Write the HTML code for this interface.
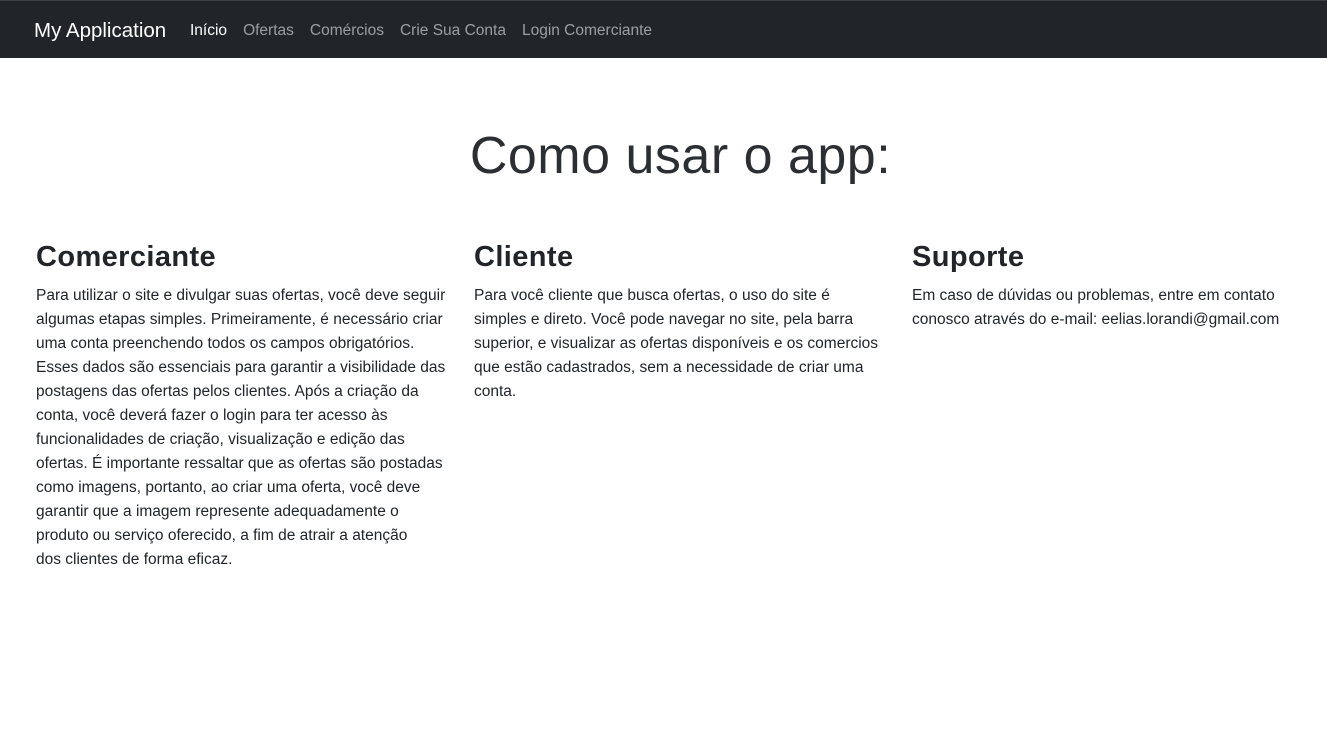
<!DOCTYPE html>
<html><head><meta charset="utf-8"><style>
*{box-sizing:border-box;margin:0;padding:0}
body{width:1327px;height:753px;background:#fff;font-family:"Liberation Sans",sans-serif;color:#212529;overflow:hidden}
nav{height:58px;background:#212529;border-top:1px solid #3a3f44;position:relative}
.brand{position:absolute;left:34px;top:18px;color:#fff;font-size:20.5px}
.links{position:absolute;left:190px;top:21px;font-size:15.5px;white-space:nowrap}
.links span{color:rgba(255,255,255,.55);margin-right:16px}
.links span.a{color:#fff}
h1{position:absolute;top:126px;left:17px;width:1327px;text-align:center;font-weight:300;font-size:52px;color:#2b2f33;letter-spacing:0.5px}
.col{position:absolute;top:238px;width:440px}
h2{font-size:29px;font-weight:bold;line-height:38px;margin-bottom:8px;letter-spacing:0.4px}
p{font-size:15.5px;line-height:24px;white-space:nowrap}
</style></head><body>
<nav><div class="brand">My Application</div>
<div class="links"><span class="a">Início</span><span>Ofertas</span><span>Comércios</span><span>Crie Sua Conta</span><span>Login Comerciante</span></div></nav>
<h1>Como usar o app:</h1>
<div class="col" style="left:36px"><h2>Comerciante</h2><p>Para utilizar o site e divulgar suas ofertas, você deve seguir<br>algumas etapas simples. Primeiramente, é necessário criar<br>uma conta preenchendo todos os campos obrigatórios.<br>Esses dados são essenciais para garantir a visibilidade das<br>postagens das ofertas pelos clientes. Após a criação da<br>conta, você deverá fazer o login para ter acesso às<br>funcionalidades de criação, visualização e edição das<br>ofertas. É importante ressaltar que as ofertas são postadas<br>como imagens, portanto, ao criar uma oferta, você deve<br>garantir que a imagem represente adequadamente o<br>produto ou serviço oferecido, a fim de atrair a atenção<br>dos clientes de forma eficaz.</p></div>
<div class="col" style="left:474px"><h2>Cliente</h2><p>Para você cliente que busca ofertas, o uso do site é<br>simples e direto. Você pode navegar no site, pela barra<br>superior, e visualizar as ofertas disponíveis e os comercios<br>que estão cadastrados, sem a necessidade de criar uma<br>conta.</p></div>
<div class="col" style="left:912px"><h2>Suporte</h2><p>Em caso de dúvidas ou problemas, entre em contato<br>conosco através do e-mail: eelias.lorandi@gmail.com</p></div>
</body></html>
